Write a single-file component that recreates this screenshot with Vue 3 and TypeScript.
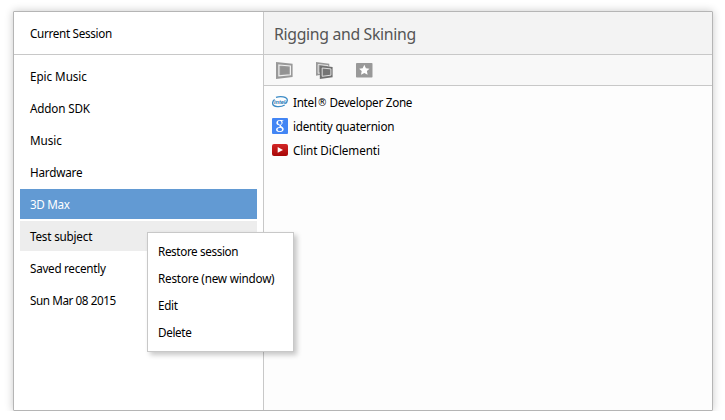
<script setup lang="ts">
import { ref } from 'vue'

interface Item { label: string; spacing: number }
interface Tab extends Item { icon: 'intel' | 'google' | 'youtube'; mark?: string; rest?: string }

const sessions: Item[] = [
  { label: 'Epic Music', spacing: -0.05 },
  { label: 'Addon SDK', spacing: -0.17 },
  { label: 'Music', spacing: -0.05 },
  { label: 'Hardware', spacing: -0.2 },
  { label: '3D Max', spacing: -0.35 },
  { label: 'Test subject', spacing: -0.2 },
  { label: 'Saved recently', spacing: -0.28 },
  { label: 'Sun Mar 08 2015', spacing: -0.42 },
]
const tabs: Tab[] = [
  { label: 'Intel', mark: '®', rest: ' Developer Zone', icon: 'intel', spacing: -0.28 },
  { label: 'identity quaternion', icon: 'google', spacing: -0.23 },
  { label: 'Clint DiClementi', icon: 'youtube', spacing: -0.1 },
]
const actions: Item[] = [
  { label: 'Restore session', spacing: -0.37 },
  { label: 'Restore (new window)', spacing: -0.2 },
  { label: 'Edit', spacing: -0.3 },
  { label: 'Delete', spacing: -0.35 },
]
const selected = ref(4)
const targeted = ref(5)
</script>

<template>
  <main class="panel">
    <aside class="sidebar">
      <header class="current"><span>Current Session</span></header>
      <ul class="sessions">
        <li v-for="(s, i) in sessions" :key="s.label" :class="{ selected: i === selected, targeted: i === targeted }" @click="selected = i">
          <span :style="{ letterSpacing: s.spacing + 'px' }">{{ s.label }}</span>
        </li>
      </ul>
    </aside>
    <section class="content">
      <header class="title"><h1>Rigging and Skining</h1></header>
      <div class="toolbar">
        <button aria-label="Restore session">
          <svg width="17" height="17" viewBox="0 0 17 17">
            <path d="M-.3 0 16.6 1.8V15L-.3 17Z" fill="#999" />
            <path d="M2.9 3 14.4 4V12.8L2.9 13.9Z" fill="#999" stroke="#f0f0f0" stroke-width="1.2" />
            <path d="M4.6 4.9 12.9 5.4V11.5L4.6 12.1Z" fill="#929292" />
          </svg>
        </button>
        <button aria-label="Restore in new window">
          <svg width="17" height="17" viewBox="0 0 17 17">
            <path d="M-.3 0 13.3 1.8V11L-.3 13.7Z" fill="#999" />
            <path d="M2.2 2.5 12 3.6V10L2.2 11.3Z" fill="#999" stroke="#eee" stroke-width=".9" />
            <path d="M3.8 3.4 16.6 5V15.2L3.8 17Z" fill="#707070" />
            <path d="M6.2 6 14.9 6.9V13.2L6.2 14.3Z" fill="#757575" stroke="#e8e8e8" stroke-width=".9" />
          </svg>
        </button>
        <button aria-label="Bookmark">
          <svg width="17" height="17" viewBox="0 0 17 17">
            <rect y="1" width="16.5" height="14.5" rx=".8" fill="#999" />
            <path d="M8.3 2.7 9.9 6.3 13.5 6.7 10.9 9.1 11.6 12.8 8.3 11 5 12.8 5.7 9.1 3.1 6.7 6.7 6.3Z" fill="#fff" />
          </svg>
        </button>
      </div>
      <ul class="tabs">
        <li v-for="t in tabs" :key="t.label">
          <svg v-if="t.icon === 'intel'" width="16" height="16" viewBox="0 0 16 16">
            <path d="M4 3.4C8 1.9 15.6 2.4 15.3 6.4 15.2 7.8 14.4 8.9 13.2 9.6M12.7 11C8.6 13.5.8 13.2.6 9.4.5 7.9 1.3 6.5 2.6 5.5" fill="none" stroke="#3b8bc6" stroke-width="1.3" />
            <text x="2" y="10" textLength="11.3" lengthAdjust="spacingAndGlyphs" class="intel">intel</text>
          </svg>
          <svg v-else-if="t.icon === 'google'" width="16" height="16" viewBox="0 0 16 16">
            <rect width="16" height="16" rx="1" fill="#4285f4" />
            <path d="M11.7 2H7.9C3.2 2 3.3 7.6 7.6 7.3 7.1 8.1 7.5 8.6 8 9.1 2.8 9.2 3 14 7.2 14 12.6 14 12.7 9.8 9.8 8.4 8.5 7.8 8.6 7.4 9.7 6.6 11.2 5.4 10.8 3.6 9.8 2.8H10.9ZM7.4 2.8C9.8 2.7 10.4 6.7 8.2 6.8 5.9 6.8 5.2 2.9 7.4 2.8ZM8.3 9.8C11.2 10.6 10.5 13.2 7.9 13.2 4.9 13.2 4.6 9.9 8.3 9.8Z" fill="#fff" fill-rule="evenodd" />
          </svg>
          <svg v-else width="16" height="16" viewBox="0 0 16 16">
            <defs><linearGradient id="tube" x2="0" y2="1"><stop stop-color="#d32626" /><stop offset="1" stop-color="#a70707" /></linearGradient></defs>
            <rect y="2" width="16" height="12" rx="2" fill="url(#tube)" />
            <path d="M5.7 5 11 8 5.7 10.8Z" fill="#fff" />
          </svg>
          <span class="label" :style="{ letterSpacing: t.spacing + 'px' }">{{ t.label }}<span v-if="t.mark" class="mark">{{ t.mark }}</span>{{ t.rest }}</span>
        </li>
      </ul>
    </section>
    <ul class="menu">
      <li v-for="a in actions" :key="a.label"><span :style="{ letterSpacing: a.spacing + 'px' }">{{ a.label }}</span></li>
    </ul>
  </main>
</template>

<style>
body { background: #fff; }
#app { display: flow-root; }
</style>
<style scoped>
.panel { position: relative; box-sizing: border-box; display: flex; width: 700px; height: 400px; margin: 11px 0 0 13px; border: 1px solid #b5b5b5; border-radius: 1px; background: #fff; box-shadow: 0 0 8px rgba(0,0,0,.22); color: #000; font: 11.7px/18px "Noto Sans", "Open Sans", sans-serif; }
ul { list-style: none; margin: 0; padding: 0; }
li { white-space: nowrap; }
.sidebar { box-sizing: border-box; width: 250px; border-right: 1px solid #c8c8c8; }
.current, .title { box-sizing: border-box; height: 43px; border-bottom: 1px solid #c8c8c8; display: flex; align-items: center; }
.current { padding: 0 16px; letter-spacing: -.32px; }
.sessions { display: flex; flex-direction: column; gap: 2px; padding: 6px; }
.sessions li { height: 30px; line-height: 30px; padding-left: 10px; }
.sessions .selected { background: #629ad3; color: #fff; }
.sessions .targeted { background: #ededed; }
.content { flex: 1; background: #fdfdfd; }
.title { background: #f3f3f3; padding: 2px 10px 0; }
h1 { margin: 0; color: #555; font-size: 15.8px; font-weight: 400; line-height: 22px; letter-spacing: -.32px; }
.toolbar { box-sizing: border-box; height: 31px; display: flex; gap: 23px; align-items: center; padding-left: 12px; background: #f8f8f8; border-bottom: 1px solid #c8c8c8; }
button { display: block; border: 0; padding: 0; width: 17px; height: 17px; background: none; }
svg { display: block; flex: none; }
.tabs { padding: 4px 8px; }
.tabs li { height: 24px; display: flex; align-items: center; gap: 5px; }
.mark { display: inline-block; width: 9.5px; margin-left: .5px; font: 10px/1 "DejaVu Sans", sans-serif; vertical-align: 1px; }
.intel { font: italic bold 6px "Liberation Sans", sans-serif; fill: #2874b2; }
.menu { position: absolute; left: 133px; top: 220px; width: 147px; height: 120px; box-sizing: border-box; border: 1px solid #c8c8c8; background: #fff; padding: 5px 10px; box-shadow: 3px 3px 5px rgba(0,0,0,.22); }
.menu li { height: 27px; line-height: 27px; }
</style>
